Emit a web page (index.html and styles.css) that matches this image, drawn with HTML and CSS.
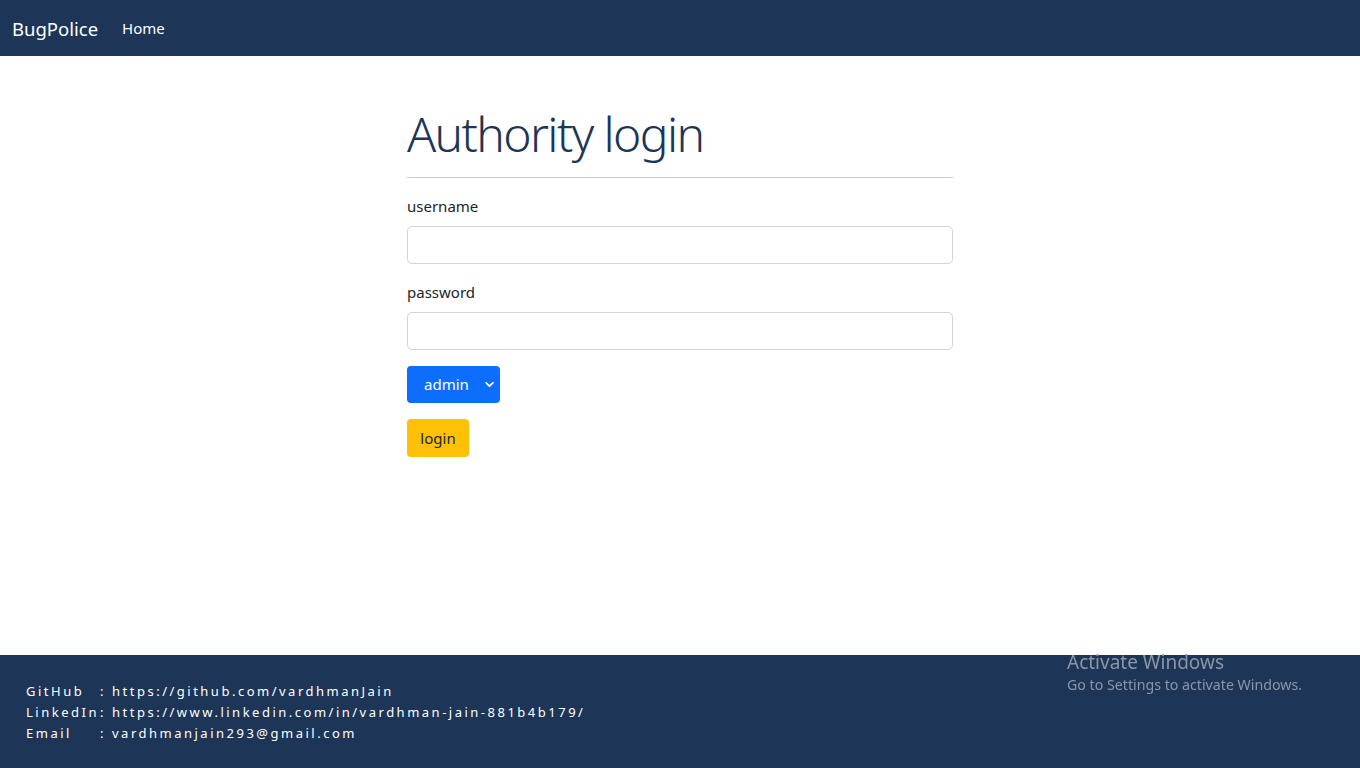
FILE: index.html
```html
<!DOCTYPE html>
<html>
<head>
<meta charset="utf-8">
<link rel="stylesheet" href="styles.css">
</head>
<body>
<div class="page">
  <nav class="navbar">
    <span class="brand">BugPolice</span>
    <span class="nav-link">Home</span>
  </nav>
  <main class="main">
    <div class="container">
      <h1 class="title">Authority login</h1>
      <hr class="rule">
      <label class="label">username</label>
      <input class="input" type="text">
      <label class="label">password</label>
      <input class="input" type="password">
      <div class="select">
        <span>admin</span>
        <svg class="chev" width="11" height="9" viewBox="0 0 16 16"><path d="M2 5l6 6 6-6" fill="none" stroke="#fff" stroke-width="3" stroke-linecap="round" stroke-linejoin="round"/></svg>
      </div>
      <button class="btn-login">login</button>
    </div>
  </main>
  <footer class="footer">
    <div class="row"><span class="key">GitHub</span><span class="colon">:</span><span>https://github.com/vardhmanJain</span></div>
    <div class="row"><span class="key">LinkedIn</span><span class="colon">:</span><span>https://www.linkedin.com/in/vardhman-jain-881b4b179/</span></div>
    <div class="row"><span class="key">Email</span><span class="colon">:</span><span>vardhmanjain293@gmail.com</span></div>
  </footer>
</div>
<div class="watermark">
  <div class="wm-title">Activate Windows</div>
  <div class="wm-sub">Go to Settings to activate Windows.</div>
</div>
</body>
</html>
```

FILE: styles.css
```css
* { box-sizing: border-box; }
html, body { margin: 0; padding: 0; }
body {
  font-family: "Noto Sans", "Open Sans", sans-serif;
  color: #212529;
  background: #fff;
}
.page {
  display: flex;
  flex-direction: column;
  height: 768px;
}
.navbar {
  height: 56px;
  background: #1d3557;
  display: flex;
  align-items: center;
  padding: 0 12px;
  flex-shrink: 0;
}
.brand {
  color: #fff;
  font-size: 18.5px;
  margin-right: 24px;
}
.nav-link {
  color: #fff;
  font-size: 15px;
}
.main {
  flex: 1;
}
.container {
  width: 546px;
  margin: 0 auto;
  padding-top: 49px;
  display: flex;
  flex-direction: column;
  align-items: flex-start;
}
.title {
  margin: 0;
  font-size: 48px;
  font-weight: 300;
  letter-spacing: -1.6px;
  line-height: 1.2;
  color: #1d3557;
}
.rule {
  width: 100%;
  margin: 14px 0 16px;
  border: 0;
  border-top: 1px solid #c9ccd2;
}
.label {
  font-size: 15px;
  line-height: 24px;
  margin-bottom: 8px;
}
.input {
  width: 100%;
  height: 38px;
  border: 1px solid #ced4da;
  border-radius: 5px;
  margin: 0 0 16px;
  font: inherit;
}
.select {
  width: 93px;
  height: 37px;
  background: #0d6efd;
  border-radius: 4px;
  color: #fff;
  font-size: 15px;
  display: flex;
  align-items: center;
  padding-left: 17px;
  gap: 15px;
  margin-bottom: 16px;
}
.btn-login {
  width: 62px;
  height: 38px;
  background: #ffc107;
  border: 0;
  border-radius: 4px;
  color: #212529;
  font: inherit;
  font-size: 15px;
  padding: 0;
}
.footer {
  height: 113px;
  background: #1d3557;
  color: #fff;
  padding: 26px 26px 0;
  font-size: 13px;
  letter-spacing: 2.5px;
  flex-shrink: 0;
}
.row {
  line-height: 21px;
  display: flex;
}
.key {
  width: 74px;
  flex-shrink: 0;
  white-space: nowrap;
}
.colon {
  width: 12px;
  flex-shrink: 0;
}
.watermark {
  position: fixed;
  left: 1067px;
  top: 650px;
  color: #8b96a6;
}
.wm-title {
  font-size: 19px;
  line-height: 24px;
}
.wm-sub {
  font-size: 14.2px;
  line-height: 22px;
}
```
